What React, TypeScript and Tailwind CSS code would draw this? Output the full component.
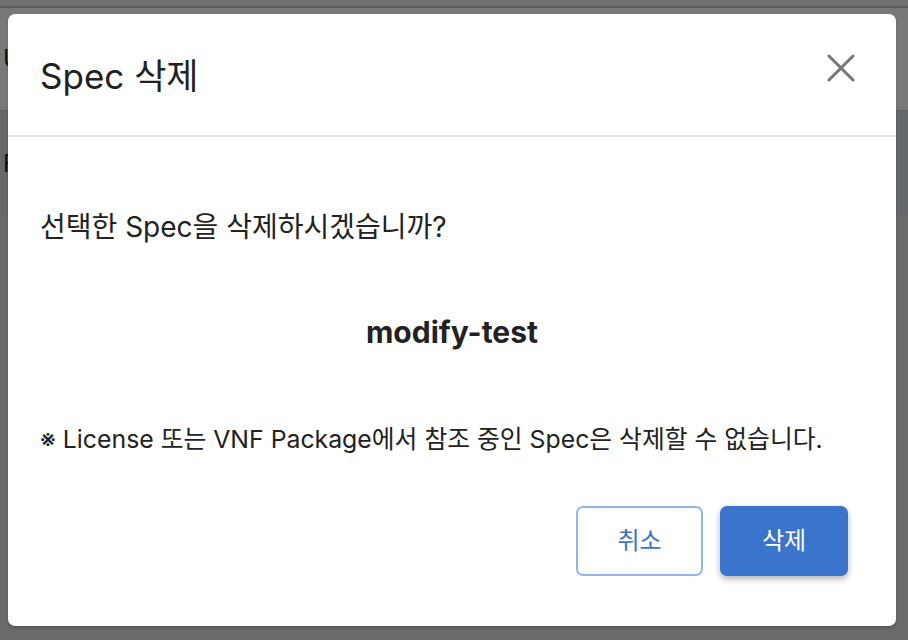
import React from 'react';

const font = { fontFamily: 'Inter, "Noto Sans CJK KR", sans-serif' };

function CloseIcon() {
  return (
    <svg width="28" height="28" viewBox="0 0 28 28" fill="none">
      <path d="M2 2L26 26M26 2L2 26" stroke="#757575" strokeWidth="3" strokeLinecap="round" />
    </svg>
  );
}

export default function App() {
  return (
    <div className="relative h-[640px] w-full overflow-hidden bg-[#bdbdbd]" style={font}>
      {/* page behind the dialog */}
      <div className="flex h-full flex-col">
        <div className="h-[6px] bg-[#ececec]" />
        <div className="h-[2px] bg-[#c4c4c4]" />
        <div className="flex h-[102px] items-center bg-white pl-[3px] text-[24px] text-[#222]">U</div>
        <div className="h-[1px] bg-[#cfcfcf]" />
        <div className="flex h-[105px] items-center bg-[#d7dde4] pl-[3px] text-[24px] text-[#222]">F</div>
        <div className="flex-1 bg-[#e2e2e2]" />
      </div>

      {/* overlay */}
      <div className="absolute inset-0 bg-black/[0.53]" />

      {/* dialog */}
      <div className="absolute left-[8px] top-[14px] flex h-[612px] w-[888px] flex-col rounded-[7px] bg-white shadow-[0_2px_3px_rgba(0,0,0,0.18)]">
        <div className="flex h-[123px] shrink-0 items-center justify-between border-b-2 border-[#e0e0e0] pl-8 pr-[41px]">
          <h2 className="mt-[3px] text-[35px] text-[#212121]">Spec 삭제</h2>
          <button className="mb-[14px] flex items-center justify-center">
            <CloseIcon />
          </button>
        </div>

        <div className="flex flex-1 flex-col px-8 pt-[72px] text-[#222]">
          <p className="text-[28px] leading-[36px]">선택한 Spec을 삭제하시겠습니까?</p>
          <p className="mt-[67px] text-center text-[30px] font-bold leading-[40px]">modify-test</p>
          <p className="mt-[70px] text-[24.8px] leading-[34px]">
            ※ License 또는 VNF Package에서 참조 중인 Spec은 삭제할 수 없습니다.
          </p>

          <div className="mt-[50px] flex justify-end gap-[17px] pr-4">
            <button className="h-[70px] w-[127px] rounded-[7px] border-2 border-[#93b6e8] bg-white text-[24px] text-[#3a75cb]">
              취소
            </button>
            <button className="h-[70px] w-[128px] rounded-[7px] bg-[#3a75cb] text-[24px] text-white shadow-[0_3px_6px_rgba(0,0,0,0.3)]">
              삭제
            </button>
          </div>
        </div>
      </div>
    </div>
  );
}
